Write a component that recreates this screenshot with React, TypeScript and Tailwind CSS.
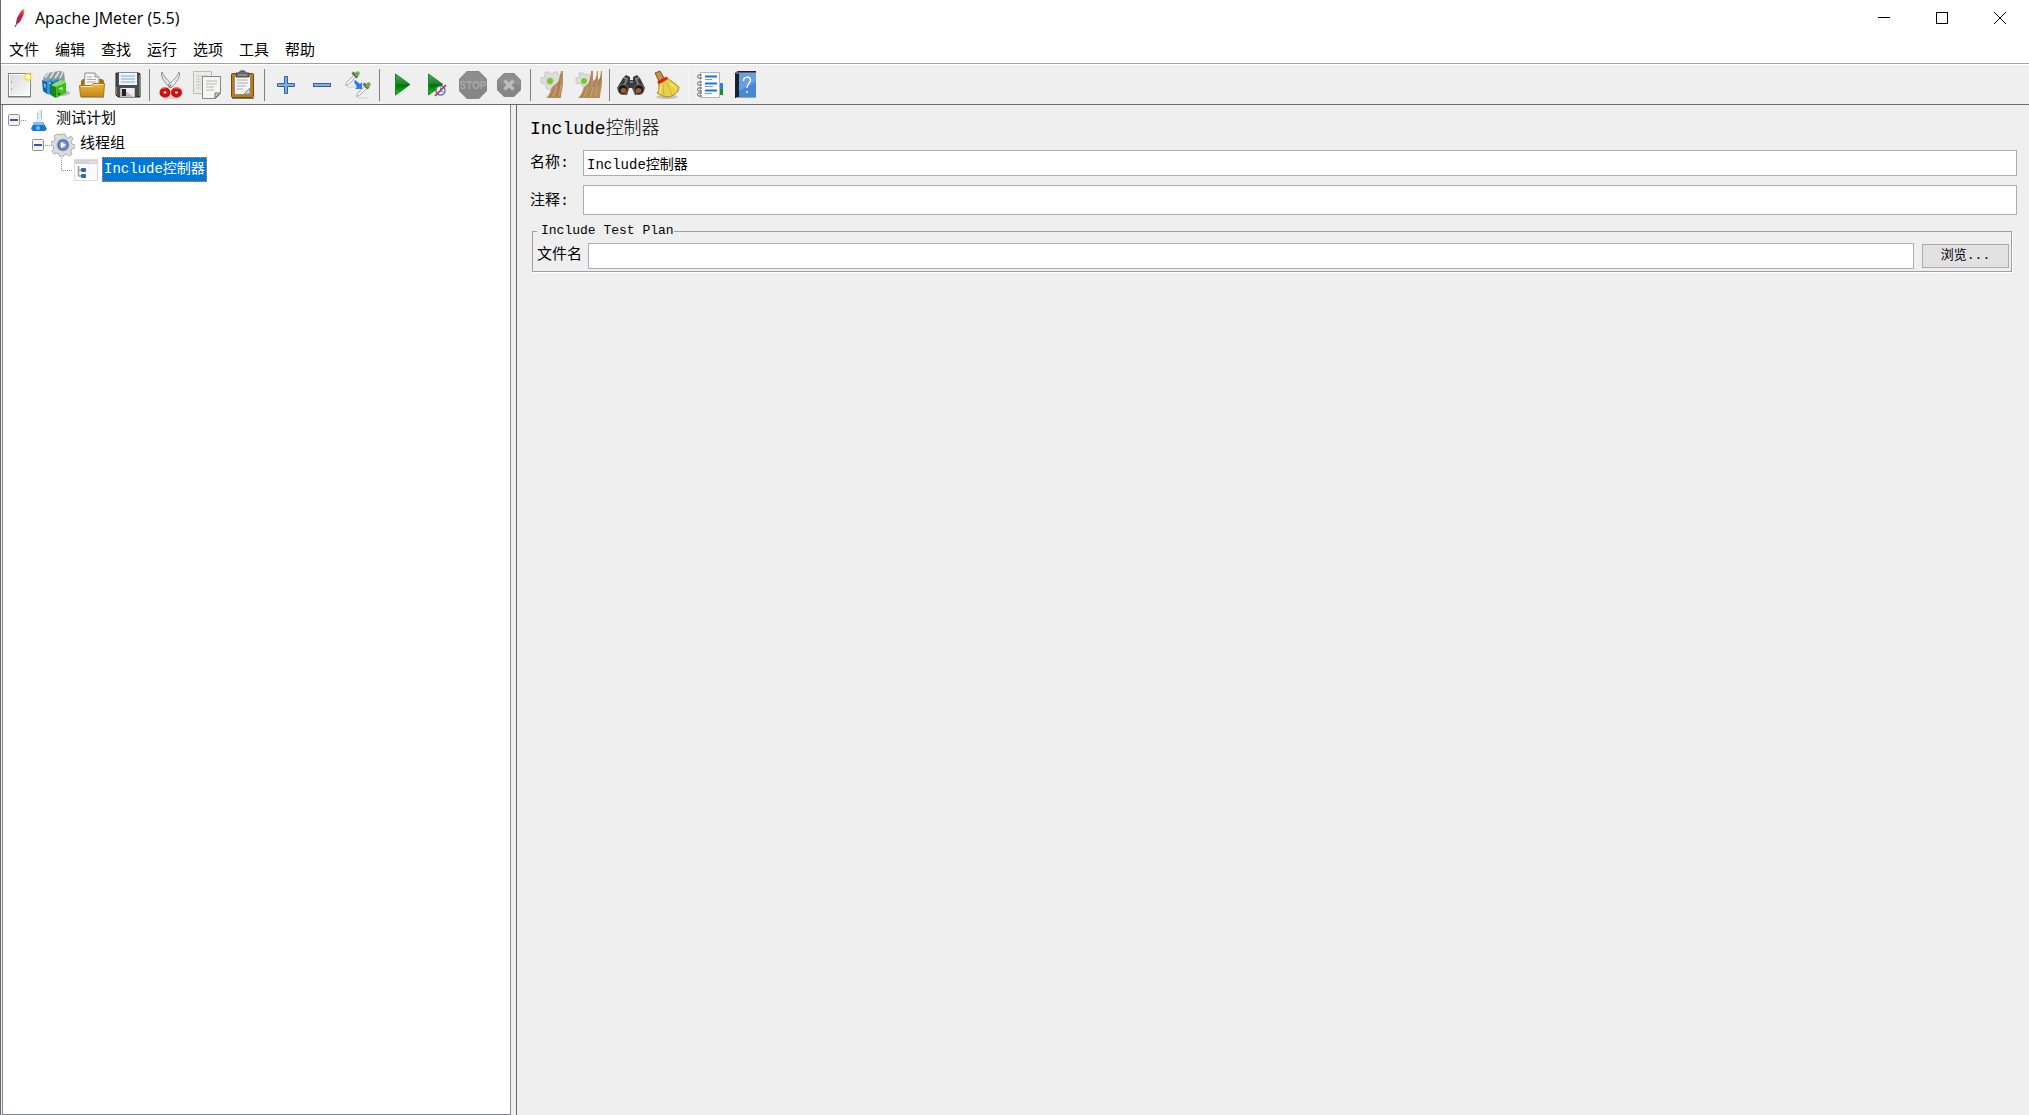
import React from 'react';

const NewIcon = () => (
  <svg width="26" height="28" viewBox="0 0 26 28">
    <defs>
      <linearGradient id="page" x1="0" y1="0" x2="1" y2="1">
        <stop offset="0" stopColor="#d9d9d9" />
        <stop offset="1" stopColor="#fbfbfb" />
      </linearGradient>
      <radialGradient id="glow">
        <stop offset="0" stopColor="#fff" />
        <stop offset="0.4" stopColor="#fdf6b0" />
        <stop offset="0.6" stopColor="#f2dc3c" />
        <stop offset="1" stopColor="#f5e56a" stopOpacity="0" />
      </radialGradient>
    </defs>
    <rect x="1.5" y="2.5" width="22" height="23" fill="url(#page)" stroke="#858581" />
    <rect x="2.5" y="3.5" width="20" height="21" fill="none" stroke="#fff" />
    <path d="M1 26h23" stroke="#777" />
    <path d="M4.500 10v2M4.500 17v2" stroke="#aaa" />
    <circle cx="21" cy="6" r="5" fill="url(#glow)" />
  </svg>
);

const TemplatesIcon = () => (
  <svg width="30" height="30" viewBox="0 0 30 30">
    <ellipse cx="21" cy="23" rx="8" ry="3" fill="#999" opacity=".6" />
    <path d="M2 8l4-5 7-1 5-1 5 1 1 9-10 6-11-4z" fill="#8e9a9e" />
    <path d="M4 8l4-5M9 8l4-6M14 8l4-6M19 8l3-6" stroke="#dfe8ea" strokeWidth="1.500" />
    <path d="M1 10l5 2v12l-4-3z" fill="#0b6aa9" />
    <path d="M6 11l5-2v16l-5-1z" fill="#2a9bdb" />
    <path d="M9 11l3 1v14l-3-2z" fill="#0a5f9c" />
    <path d="M12 11l5-2 2 3v12l-7 3z" fill="#178bcb" />
    <path d="M10 15l5 2v11l-5-3z" fill="#1d8510" />
    <path d="M15 17l10-5v11l-10 5z" fill="#3fbb1c" />
    <path d="M10 15l10-5 5 2-10 5z" fill="#8ae06a" />
    <path d="M3 14l1 .5v3M8 13h2M18 19l3-1.500v3" stroke="#eaf8ff" fill="none" />
    <circle cx="18" cy="24" r="1.200" fill="#166808" />
  </svg>
);

const OpenIcon = () => (
  <svg width="28" height="28" viewBox="0 0 28 28">
    <defs>
      <linearGradient id="folder" x1="0" y1="0" x2="0" y2="1">
        <stop offset="0" stopColor="#e9b94c" />
        <stop offset="1" stopColor="#c58713" />
      </linearGradient>
    </defs>
    <path d="M3 10l2-2h19l2 2v15H3z" fill="#a66d0b" />
    <path d="M7 2h10l4 4v12H6z" fill="#f7f7f7" stroke="#8d8d8d" />
    <path d="M17 2v4h4" fill="#ddd" stroke="#999" />
    <path d="M9 6h5M9 8.500h9M9 11h9" stroke="#aaa" />
    <path d="M1.500 14.500h12l2-2h11l-1 13h-23z" fill="url(#folder)" stroke="#b0780f" />
    <path d="M3 15.500h11l2-2h9" stroke="#fbe19a" fill="none" />
    <path d="M3 26.500h23" stroke="#777" opacity=".6" />
  </svg>
);

const SaveIcon = () => (
  <svg width="28" height="28" viewBox="0 0 28 28">
    <path d="M2 2h23l1 1v23H4l-2-2z" fill="#4b4b4d" stroke="#29292b" />
    <rect x="5" y="2" width="18" height="12" fill="#edf4fb" />
    <path d="M7 5h14M7 8h14M7 11h14" stroke="#8aa9cd" />
    <rect x="6" y="17" width="15" height="9" fill="#bcbcbc" />
    <path d="M7 17h13v9z" fill="#ededed" />
    <rect x="8" y="18" width="4" height="7" fill="#222" />
    <path d="M2.500 16v8M25.500 4v21" stroke="#777" />
  </svg>
);

const CutIcon = () => (
  <svg width="26" height="28" viewBox="0 0 26 28">
    <ellipse cx="13" cy="26" rx="9" ry="2" fill="#bbb" opacity=".6" />
    <path d="M4 1c-2 4 2 10 8 16l3-3C12 11 7 8 4 1z" fill="#e3e3e0" stroke="#8b8d89" />
    <path d="M21 1c2 4-2 10-8 16l-3-3C13 11 18 8 21 1z" fill="#eeeeec" stroke="#8b8d89" />
    <rect x="3.500" y="18.500" width="7" height="6" rx="3" fill="none" stroke="#d50d0d" strokeWidth="4" />
    <rect x="15" y="18.500" width="7" height="6" rx="3" fill="none" stroke="#d50d0d" strokeWidth="4" />
    <path d="M3 18c1-1 3-1 5-1M16 17c3 0 5 0 6 1" stroke="#ff6b6b" fill="none" />
    <circle cx="12.500" cy="14.500" r="1" fill="#777" />
  </svg>
);

const CopyIcon = () => (
  <svg width="30" height="30" viewBox="0 0 30 30">
    <path d="M1.500 1.500h18v22h-18z" fill="#ebebe9" stroke="#bcbcb9" />
    <path d="M4 6h12M4 9h5M4 12h5M4 15h5M4 18h5" stroke="#c3c3c0" />
    <path d="M10.500 6.500h18v17l-5 5h-13z" fill="#f5f5f4" stroke="#878783" />
    <path d="M14 11h11M14 14h11M14 17h8M14 20h8" stroke="#b6b6b3" />
    <path d="M28 23l-5 5v-5z" fill="#ccc" stroke="#777" />
  </svg>
);

const PasteIcon = () => (
  <svg width="26" height="30" viewBox="0 0 26 30">
    <rect x="1.500" y="3.500" width="22" height="24" rx="1" fill="#bd7a1a" stroke="#784708" />
    <path d="M4.500 5.500h16v19h-16z" fill="#f5f5f4" stroke="#8c8c88" />
    <path d="M7 10h11M7 13h11M7 16h9M7 19h6" stroke="#aaaaa7" />
    <path d="M20 18l-6 6h6z" fill="#d6d6d4" stroke="#888" />
    <path d="M6 3h3c0-3 7-3 7 0h3v4H6z" fill="#696b67" stroke="#4a4c48" />
    <path d="M8 5h9" stroke="#a8aaa6" />
    <path d="M2 28.500h22" stroke="#777" />
  </svg>
);

const PlusIcon = () => (
  <svg width="20" height="20" viewBox="0 0 20 20">
    <path d="M8.500 1.500h3v7h7v3h-7v7h-3v-7h-7v-3h7z" fill="#86aedd" stroke="#2f62a3" />
  </svg>
);

const MinusIcon = () => (
  <svg width="20" height="20" viewBox="0 0 20 20">
    <rect x="1.500" y="8.500" width="17" height="3" fill="#86aedd" stroke="#2f62a3" />
  </svg>
);

const Dropper = () => (
  <>
    <path d="M1.500 14.500l1-3 7-7 2 2-7 7z" fill="#f4f4f2" stroke="#a9aaa4" />
    <path d="M7.500 2.500l5 5 2-2-5-5z" fill="#5f6f57" />
    <path d="M10 3l2-2c2-2 5 1 3 3l-2 2z" fill="#6cab53" />
  </>
);

const ToggleIcon = () => (
  <svg width="28" height="28" viewBox="0 0 28 28">
    <path d="M3 16h10M14 27h9" stroke="#dfdfdf" strokeWidth="2" />
    <Dropper />
    <g transform="translate(11 11)">
      <Dropper />
    </g>
    <path d="M11 9l5 4 2-2v7h-7l2-2-3-5z" fill="#2d7df0" />
  </svg>
);

const PlayTriangle = () => (
  <>
    <defs>
      <linearGradient id="play" x1="0" y1="0" x2="0" y2="1">
        <stop offset="0" stopColor="#4cad58" />
        <stop offset="0.48" stopColor="#178223" />
        <stop offset="0.52" stopColor="#006c00" />
        <stop offset="1" stopColor="#12d412" />
      </linearGradient>
    </defs>
    <path d="M1.500 2v21L16 12.500z" fill="url(#play)" stroke="#21872a" />
  </>
);

const StartIcon = () => (
  <svg width="14" height="26" viewBox="0 0 14 26" className="overflow-visible">
    <PlayTriangle />
  </svg>
);

const StartNoPausesIcon = () => (
  <svg width="20" height="26" viewBox="0 0 20 26">
    <PlayTriangle />
    <circle cx="13.500" cy="18.500" r="4.500" fill="#e8f0fb" stroke="#4d80c4" strokeWidth="1.500" />
    <path d="M13.500 15.500V19l3 1" stroke="#4d80c4" fill="none" />
    <path d="M8 24L19 13" stroke="#e02020" strokeWidth="1.600" />
  </svg>
);

const StopIcon = () => (
  <svg width="30" height="30" viewBox="0 0 30 30">
    <path d="M9 1h12l8 8v12l-8 8H9l-8-8V9z" fill="#868686" />
    <path d="M9.500 2h11L28 9.500V14H2V9.500z" fill="#8e8e8e" />
    <text x="15" y="19" textAnchor="middle" fontFamily="Liberation Sans, sans-serif" fontSize="10" fontWeight="bold" fill="#a9a9a9">STOP</text>
  </svg>
);

const ShutdownIcon = () => (
  <svg width="26" height="26" viewBox="0 0 26 26">
    <path d="M8 1h10l7 7v10l-7 7H8l-7-7V8z" fill="#868686" />
    <path d="M8 2h10l6 6v5H2V8z" fill="#8e8e8e" />
    <path d="M8.500 8.500l9 9M17.500 8.500l-9 9" stroke="#bcbcbc" strokeWidth="3.500" />
  </svg>
);

const ClearIcon = () => (
  <svg width="28" height="30" viewBox="0 0 28 30">
    <path d="M7 2h4l1 2h3l1-2h3l2 4 3 1v5l-3 1v4l-4 3-2-2-3 2-4-2v-4l-5-1V8l4-1z" fill="#dededf" stroke="#c6c6c9" />
    <path d="M23 1h2v11c0 5-2 12-2 16H8c5-4 4-9 7-12 3-2 5-4 6-6z" fill="#b88c5e" />
    <path d="M23 4l-2 9-9 14M22 14l-4 13M21 17v10" stroke="#a0794f" fill="none" />
    <path d="M19 16l-4 10M23 15l-2 11" stroke="#cda67a" fill="none" />
    <circle cx="12" cy="11" r="3.500" fill="#74cc24" stroke="#c9cdc2" />
  </svg>
);

const ClearAllIcon = () => (
  <svg width="30" height="30" viewBox="0 0 30 30">
    <path d="M6 3h4l1 2 3-1 4 3v8l-5 3-4-2v-2l-6-1V8l4-1z" fill="#dededf" stroke="#c6c6c9" />
    <circle cx="11" cy="11" r="3" fill="#74cc24" />
    <path d="M18 1h2v10l3-2 1-8h1v9l2-2 1-7h1v10c0 6-2 12-2 17H5c5-4 4-9 7-12 3-2 5-4 5-7z" fill="#b88c5e" />
    <path d="M18 7l-2 8-8 12M24 7l-3 8-6 12M28 6l-2 9-5 12" stroke="#a0794f" fill="none" />
    <path d="M15 17l-4 9M20 17l-3 10M25 16l-3 10" stroke="#cda67a" fill="none" />
  </svg>
);

const SearchIcon = () => (
  <svg width="30" height="24" viewBox="0 0 30 24">
    <path d="M7 5l3-3 4 2v3h3V4l4-2 3 3 5 10-3 6-7 1-3-7h-3l-2 7-7-1-3-6z" fill="#3b3c3e" />
    <path d="M8 5l3 1-3 7M23 5l-3 1 3 7M14 9h3" stroke="#8d9095" strokeWidth="1.500" fill="none" />
    <circle cx="7" cy="16.500" r="5" fill="#1b1b1b" stroke="#777" />
    <circle cx="23" cy="16.500" r="5" fill="#1b1b1b" stroke="#777" />
    <ellipse cx="7.500" cy="17.500" rx="3" ry="2.500" fill="#a65a24" />
    <ellipse cx="22.500" cy="17.500" rx="3" ry="2.500" fill="#a65a24" />
  </svg>
);

const ResetSearchIcon = () => (
  <svg width="28" height="30" viewBox="0 0 28 30">
    <ellipse cx="14" cy="27" rx="11" ry="2" fill="#aaa" opacity=".6" />
    <path d="M2 3l5-2 4 7-5 3z" fill="#c98f4b" stroke="#805017" />
    <path d="M5 12l9-5c3 4 8 6 12 10 0 5-5 10-14 10l-8-4c3-3 2-7 1-11z" fill="#e8d04a" stroke="#a98a12" />
    <path d="M10 15l1 11M14 13l5 12" stroke="#cdb239" fill="none" />
    <path d="M8 16l-1 7M17 13l6 6" stroke="#fff39a" fill="none" />
    <path d="M5 13l9-5" stroke="#d92020" strokeWidth="3" />
  </svg>
);

const FunctionHelperIcon = () => (
  <svg width="28" height="28" viewBox="0 0 28 28">
    <rect x="22" y="12" width="5" height="6" fill="#2a7fe0" />
    <rect x="22" y="18" width="5" height="6" fill="#149420" />
    <rect x="4.500" y="1.500" width="19" height="25" fill="#fff" stroke="#b7b7b7" />
    <path d="M9 5.500h12M9 12.500h12M9 19.500h12" stroke="#1f6feb" strokeWidth="2" />
    <path d="M9 8.500h7M9 15.500h8M9 22.500h7" stroke="#5fa3f5" />
    <path d="M6 4H3c-2 0-2 3 0 3h3M6 11H3c-2 0-2 3 0 3h3M6 17H3c-2 0-2 3 0 3h3M6 22H3c-2 0-2 3 0 3h3" fill="none" stroke="#55585a" />
  </svg>
);

const HelpIcon = () => (
  <svg width="26" height="30" viewBox="0 0 26 30">
    <path d="M2 3l3-2h18v25l-1 2H2z" fill="#17222f" />
    <path d="M6 3h17v24H6z" fill="#4787d6" />
    <path d="M6 3h17v9L6 21z" fill="#669fe2" />
    <path d="M3 3h20M3 27.500h20" stroke="#9aa2a8" />
    <path d="M10.500 11c0-5 7-5 7-1 0 3-3.500 3.500-3.500 8" fill="none" stroke="#fff" strokeWidth="1.500" />
    <circle cx="14" cy="22" r="1" fill="#fff" />
  </svg>
);

const FeatherIcon = () => (
  <svg width="14" height="22" viewBox="0 0 14 22">
    <defs>
      <linearGradient id="feather" x1="1" y1="0" x2="0" y2="1">
        <stop offset="0" stopColor="#f69923" />
        <stop offset="0.35" stopColor="#d8274a" />
        <stop offset="0.7" stopColor="#b8204f" />
        <stop offset="1" stopColor="#6d2e8c" />
      </linearGradient>
    </defs>
    <path d="M11 2c1 1 0 5-1 7l-3 6-3 2-1-1 1-5 4-7z" fill="url(#feather)" />
    <path d="M4 16l-2 4" stroke="#5c2a80" />
  </svg>
);

const FlaskIcon = () => (
  <svg width="18" height="24" viewBox="0 0 18 24">
    <path d="M7 4l5-3v9l4 10-2 2H3l-2-2 6-10z" fill="#e3ecf5" />
    <path d="M4 14h9l4 7-2 2H3l-2-2z" fill="#1e74d6" />
    <path d="M4 14h9l1 3H3z" fill="#8bbcf0" />
    <circle cx="8" cy="20" r="2" fill="#65c1ff" />
    <path d="M11.500 2v9M7.500 5v6" stroke="#b4c0cc" />
  </svg>
);

const GearIcon = () => (
  <svg width="24" height="24" viewBox="0 0 24 24">
    <path d="M10 1h4l1 3 2 1 3-2 2 3-2 3 1 2 3 1v3l-3 1-1 2 1 3-3 2-3-2-2 1-1 2h-3l-1-3-2-1-3 1-2-3 2-2-1-3-2-1v-3l3-1 1-2-1-3 3-2 3 1z" fill="#dcdcde" stroke="#b0b0b4" />
    <circle cx="12" cy="12" r="6" fill="#4a6da6" stroke="#a3afc2" />
    <circle cx="12" cy="12" r="4" fill="#7ea0d0" />
    <path d="M10 9l5 3-5 3z" fill="#fff" />
  </svg>
);

const ControllerIcon = () => (
  <svg width="24" height="22" viewBox="0 0 24 22">
    <rect x="0.500" y="0.500" width="23" height="21" fill="#fbfbfb" stroke="#dadadd" />
    <rect x="1" y="1" width="22" height="4" fill="#d3d3d7" />
    <path d="M15 3h2M18 3h2M21 3h1" stroke="#fff" />
    <path d="M4.500 7v10M4.500 11h4M4.500 17h4" stroke="#989ba0" strokeWidth="1.500" fill="none" />
    <rect x="7" y="9" width="5" height="4" rx="1" fill="#246bc5" />
    <rect x="7" y="15" width="5" height="4" rx="1" fill="#246bc5" />
  </svg>
);

const toolGroups = [
  [
    { name: 'New', icon: <NewIcon /> },
    { name: 'Templates', icon: <TemplatesIcon /> },
    { name: 'Open', icon: <OpenIcon /> },
    { name: 'Save', icon: <SaveIcon /> },
  ],
  [
    { name: 'Cut', icon: <CutIcon /> },
    { name: 'Copy', icon: <CopyIcon /> },
    { name: 'Paste', icon: <PasteIcon /> },
  ],
  [
    { name: 'Expand', icon: <PlusIcon /> },
    { name: 'Collapse', icon: <MinusIcon /> },
    { name: 'Toggle', icon: <ToggleIcon /> },
  ],
  [
    { name: 'Start', icon: <StartIcon /> },
    { name: 'Start no pauses', icon: <StartNoPausesIcon /> },
    { name: 'Stop', icon: <StopIcon /> },
    { name: 'Shutdown', icon: <ShutdownIcon /> },
  ],
  [
    { name: 'Clear', icon: <ClearIcon /> },
    { name: 'Clear all', icon: <ClearAllIcon /> },
  ],
  [
    { name: 'Search', icon: <SearchIcon /> },
    { name: 'Reset search', icon: <ResetSearchIcon /> },
  ],
  [
    { name: 'Function helper', icon: <FunctionHelperIcon /> },
    { name: 'Help', icon: <HelpIcon /> },
  ],
];

const menus = ['文件', '编辑', '查找', '运行', '选项', '工具', '帮助'];

const TitleBar: React.FC = () => (
  <header className="flex h-9 items-center bg-white pl-3">
    <FeatherIcon />
    <h1 className="ml-2 grow font-['Open_Sans',sans-serif] text-base">Apache JMeter (5.5)</h1>
    <div className="flex">
      <button aria-label="Minimize" className="flex h-9 w-[58px] items-center justify-center">
        <svg width="12" height="12"><path d="M0 5.500h12" stroke="#000" /></svg>
      </button>
      <button aria-label="Maximize" className="flex h-9 w-[58px] items-center justify-center">
        <svg width="12" height="12"><rect x="0.500" y="0.500" width="11" height="11" fill="none" stroke="#000" /></svg>
      </button>
      <button aria-label="Close" className="flex h-9 w-[58px] items-center justify-center">
        <svg width="12" height="12"><path d="M0 0l12 12M12 0L0 12" stroke="#000" /></svg>
      </button>
    </div>
  </header>
);

const Toolbar: React.FC = () => (
  <div className="flex h-10 items-center border-t border-white bg-[#efefef] pl-px">
    {toolGroups.map((group, i) => (
      <React.Fragment key={i}>
        {i > 0 && <span className={`mx-[3px] h-8 w-px ${i === 6 ? 'bg-[#f7f7f7]' : 'bg-[#808080]'}`} />}
        {group.map((tool) => (
          <button key={tool.name} aria-label={tool.name} className="flex h-9 w-9 items-center justify-center">
            {tool.icon}
          </button>
        ))}
      </React.Fragment>
    ))}
  </div>
);

const Expander = () => (
  <button aria-label="Collapse node" className="flex shrink-0 items-center">
    <svg width="18" height="12" viewBox="0 0 18 12">
      <rect x="0.500" y="0.500" width="11" height="11" rx="1" fill="#f4f4f4" stroke="#919191" />
      <path d="M2 6h8" stroke="#3a56a5" strokeWidth="2" />
      <path d="M13 6.500h5" stroke="#909090" strokeDasharray="1 1" />
    </svg>
  </button>
);

const Tree: React.FC = () => (
  <ul className="text-[15px] leading-[25px]">
    <li>
      <div className="flex h-[25px] items-center pl-[5px]">
        <Expander />
        <span className="ml-1"><FlaskIcon /></span>
        <span className="ml-2">测试计划</span>
      </div>
      <ul>
        <li>
          <div className="flex h-[25px] items-center pl-[29px]">
            <Expander />
            <span className="ml-px"><GearIcon /></span>
            <span className="ml-[5px]">线程组</span>
          </div>
          <ul>
            <li className="flex h-[25px] items-center pl-[58px]">
              <svg width="12" height="24"><path d="M0.500 0v13M0 12.500h12" fill="none" stroke="#909090" strokeDasharray="1 1" /></svg>
              <span className="ml-px"><ControllerIcon /></span>
              <span className="ml-1 h-[25px] border border-dotted border-[#ff8728] bg-[#0078d7] px-px text-sm leading-[23px] text-white">Include控制器</span>
            </li>
          </ul>
        </li>
      </ul>
    </li>
  </ul>
);

const Editor: React.FC = () => (
  <main className="min-w-0 grow border-l border-[#696969] pt-2 pr-3 pl-[13px]">
    <h2 className="text-lg leading-8 font-light">Include控制器</h2>
    <div className="mt-[5px] flex items-center">
      <label htmlFor="name" className="w-[53px] pt-[2px] text-[15px]">名称:</label>
      <input id="name" defaultValue="Include控制器" className="h-[26px] min-w-0 grow border border-[#abadb3] bg-white px-[3px] text-sm outline-none" />
    </div>
    <div className="mt-[9px] flex items-center">
      <label htmlFor="comment" className="w-[53px] pt-1 text-[15px]">注释:</label>
      <input id="comment" className="h-[30px] min-w-0 grow border border-[#abadb3] bg-white px-[3px] text-sm outline-none" />
    </div>
    <fieldset className="mt-[7px] mr-[5px] ml-[2px] min-w-0 border border-[#a0a0a0] pr-[2px] pb-[2px] pl-1 shadow-[1px_1px_0_#fff]">
      <legend className="pl-1 text-[13px] leading-[18px]">Include Test Plan</legend>
      <div className="flex items-center">
        <label htmlFor="filename" className="w-[51px] pt-1 text-[15px]">文件名</label>
        <input id="filename" className="mt-[3px] h-[26px] min-w-0 grow border border-[#abadb3] bg-white px-[3px] text-sm outline-none" />
        <button className="mt-[3px] ml-2 h-6 w-[87px] border border-[#adadad] bg-[#e1e1e1] text-[13px] leading-5">浏览...</button>
      </div>
    </fieldset>
  </main>
);

const App: React.FC = () => {
  return (
    <div className="flex h-screen flex-col border-l border-[#696969] bg-[#efefef] font-['Liberation_Mono','Noto_Sans_CJK_SC',monospace] text-black">
      <TitleBar />
      <nav className="flex h-[27px] items-center gap-4 bg-white pb-[2px] pl-2 font-['Noto_Sans_CJK_SC',sans-serif] text-[15px]">
        {menus.map((menu) => (
          <button key={menu} className="leading-6">{menu}</button>
        ))}
      </nav>
      <div className="border-t border-[#a0a0a0]">
        <Toolbar />
      </div>
      <div className="flex min-h-0 grow border-t border-[#696969]">
        <aside className="mr-[5px] ml-px w-[509px] shrink-0 border border-t-0 border-[#828790] bg-white pt-[2px]">
          <Tree />
        </aside>
        <Editor />
      </div>
    </div>
  );
};

export default App;
